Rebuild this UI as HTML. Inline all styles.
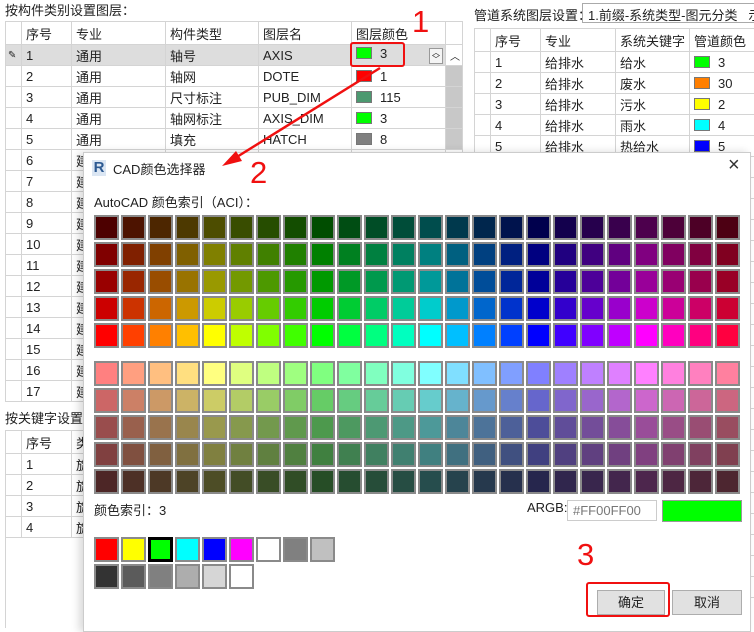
<!DOCTYPE html>
<html><head><meta charset="utf-8">
<style>
*{box-sizing:border-box;margin:0;padding:0}
body{width:754px;height:622px;overflow:hidden;background:#fff;position:relative;font-family:"Liberation Sans","Noto Sans CJK SC",sans-serif;font-size:13px;color:#222}
.abs{position:absolute}
table{border-collapse:collapse;position:absolute;table-layout:fixed}
td{border:1px solid #d4d4d4;height:21px;padding:0 0 0 4px;white-space:nowrap;overflow:hidden;font-size:13px}
tr.h td{height:23px}
.sw{display:inline-block;width:16px;height:12px;border:1px solid #777;vertical-align:-1px;margin-right:8px}
.red{color:#f01010;font-size:31px;font-family:"Liberation Sans",sans-serif}
#dlg{position:absolute;left:83px;top:152px;width:668px;height:480px;background:#fff;border:1px solid #ccc;box-shadow:-4px 0 8px rgba(0,0,0,.15)}
.cell{position:absolute;width:25px;height:25px;border:2px solid #8a8a8a}
.btn{position:absolute;height:25px;border:1px solid #adadad;background:#e1e1e1;text-align:center;line-height:23px;font-size:13px}
</style></head><body>
<div class="abs" style="left:5px;top:0px">按构件类别设置图层：</div>
<table style="left:5px;top:21px;width:457px">
<colgroup><col style="width:16px"><col style="width:50px"><col style="width:94px"><col style="width:93px"><col style="width:93px"><col style="width:94px"><col style="width:17px"></colgroup>
<tr class="h"><td></td><td>序号</td><td>专业</td><td>构件类型</td><td>图层名</td><td>图层颜色</td><td></td></tr>
<tr style="background:#ddd"><td style="font-size:10px;padding:0 0 0 2px">✎</td><td>1</td><td>通用</td><td>轴号</td><td>AXIS</td><td><span class="sw" style="background:#0f0"></span>3<span style="float:right;margin-right:2px;border:1px solid #999;width:14px;height:16px;font-size:8px;line-height:7px;text-align:center;margin-top:2px;background:#f4f4f4">︿<br>﹀</span></td><td style="background:#fff;font-size:10px">︿</td></tr>
<tr><td></td><td>2</td><td>通用</td><td>轴网</td><td>DOTE</td><td><span class="sw" style="background:#f00"></span>1</td><td style="background:#c8c8c8"></td></tr>
<tr><td></td><td>3</td><td>通用</td><td>尺寸标注</td><td>PUB_DIM</td><td><span class="sw" style="background:#4c9970"></span>115</td><td style="background:#c8c8c8"></td></tr>
<tr><td></td><td>4</td><td>通用</td><td>轴网标注</td><td>AXIS_DIM</td><td><span class="sw" style="background:#0f0"></span>3</td><td style="background:#c8c8c8"></td></tr>
<tr><td></td><td>5</td><td>通用</td><td>填充</td><td>HATCH</td><td><span class="sw" style="background:#808080"></span>8</td><td style="background:#c8c8c8"></td></tr>
<tr><td></td><td>6</td><td>建</td><td></td><td></td><td></td><td></td></tr>
<tr><td></td><td>7</td><td>建</td><td></td><td></td><td></td><td></td></tr>
<tr><td></td><td>8</td><td>建</td><td></td><td></td><td></td><td></td></tr>
<tr><td></td><td>9</td><td>建</td><td></td><td></td><td></td><td></td></tr>
<tr><td></td><td>10</td><td>建</td><td></td><td></td><td></td><td></td></tr>
<tr><td></td><td>11</td><td>建</td><td></td><td></td><td></td><td></td></tr>
<tr><td></td><td>12</td><td>建</td><td></td><td></td><td></td><td></td></tr>
<tr><td></td><td>13</td><td>建</td><td></td><td></td><td></td><td></td></tr>
<tr><td></td><td>14</td><td>建</td><td></td><td></td><td></td><td></td></tr>
<tr><td></td><td>15</td><td>建</td><td></td><td></td><td></td><td></td></tr>
<tr><td></td><td>16</td><td>建</td><td></td><td></td><td></td><td></td></tr>
<tr><td></td><td>17</td><td>建</td><td></td><td></td><td></td><td></td></tr>
</table>
<div class="abs" style="left:5px;top:408px">按关键字设置图层</div>
<table style="left:5px;top:430px;width:300px">
<colgroup><col style="width:16px"><col style="width:50px"><col style="width:234px"></colgroup>
<tr class="h"><td></td><td>序号</td><td>类</td></tr>
<tr><td></td><td>1</td><td>旋</td></tr>
<tr><td></td><td>2</td><td>旋</td></tr>
<tr><td></td><td>3</td><td>旋</td></tr>
<tr><td></td><td>4</td><td>旋</td></tr>
</table>
<div class="abs" style="left:5px;top:538px;width:1px;height:90px;background:#d4d4d4"></div>

<div class="abs" style="left:474px;top:5px">管道系统图层设置：</div>
<div class="abs" style="left:582px;top:3px;width:180px;height:20px;border:1px solid #aaa;padding:1px 0 0 5px;white-space:nowrap;overflow:hidden">1.前缀-系统类型-图元分类 &nbsp;&nbsp;示</div>
<table style="left:474px;top:28px;width:300px">
<colgroup><col style="width:16px"><col style="width:50px"><col style="width:75px"><col style="width:74px"><col style="width:85px"></colgroup>
<tr class="h"><td></td><td>序号</td><td>专业</td><td>系统关键字</td><td>管道颜色</td></tr>
<tr><td></td><td>1</td><td>给排水</td><td>给水</td><td><span class="sw" style="background:#0f0"></span>3</td></tr>
<tr><td></td><td>2</td><td>给排水</td><td>废水</td><td><span class="sw" style="background:#ff7f00"></span>30</td></tr>
<tr><td></td><td>3</td><td>给排水</td><td>污水</td><td><span class="sw" style="background:#ff0"></span>2</td></tr>
<tr><td></td><td>4</td><td>给排水</td><td>雨水</td><td><span class="sw" style="background:#0ff"></span>4</td></tr>
<tr><td></td><td>5</td><td>给排水</td><td>热给水</td><td><span class="sw" style="background:#00f"></span>5</td></tr>
<tr><td></td><td></td><td></td><td></td><td></td></tr>
<tr><td></td><td></td><td></td><td></td><td></td></tr>
<tr><td></td><td></td><td></td><td></td><td></td></tr>
<tr><td></td><td></td><td></td><td></td><td></td></tr>
<tr><td></td><td></td><td></td><td></td><td></td></tr>
<tr><td></td><td></td><td></td><td></td><td></td></tr>
<tr><td></td><td></td><td></td><td></td><td></td></tr>
<tr><td></td><td></td><td></td><td></td><td></td></tr>
<tr><td></td><td></td><td></td><td></td><td></td></tr>
<tr><td></td><td></td><td></td><td></td><td></td></tr>
<tr><td></td><td></td><td></td><td></td><td></td></tr>
<tr><td></td><td></td><td></td><td></td><td></td></tr>
<tr><td></td><td></td><td></td><td></td><td></td></tr>
<tr><td></td><td></td><td></td><td></td><td></td></tr>
<tr><td></td><td></td><td></td><td></td><td></td></tr>
<tr><td></td><td></td><td></td><td></td><td></td></tr>
<tr><td></td><td></td><td></td><td></td><td></td></tr>
<tr><td></td><td></td><td></td><td></td><td></td></tr>
<tr><td></td><td></td><td></td><td></td><td></td></tr>
<tr><td></td><td></td><td></td><td></td><td></td></tr>
<tr><td></td><td></td><td></td><td></td><td></td></tr>
</table>

<div id="dlg">
<div class="abs" style="left:8px;top:7px;width:14px;height:16px;background:#dbe6f3;color:#2d5a92;font-weight:bold;font-size:15px;line-height:16px;text-align:center">R</div>
<div class="abs" style="left:29px;top:6px;font-size:13px">CAD颜色选择器</div>
<div class="abs" style="left:644px;top:1px;font-size:20px;font-weight:300;color:#333">×</div>
<div class="abs" style="left:10px;top:39px">AutoCAD 颜色索引（ACI）：</div>
<div id="grid"></div>
<div class="abs" style="left:10px;top:347px">颜色索引：3</div>
<div class="abs" style="left:443px;top:347px">ARGB:</div>
<div class="abs" style="left:483px;top:347px;width:90px;height:21px;border:1px solid #ccc;color:#777;padding:2px 0 0 5px">#FF00FF00</div>
<div class="abs" style="left:578px;top:347px;width:80px;height:22px;border:1px solid #999;background:#0f0"></div>
<div id="quick"></div>
<div class="btn" style="left:513px;top:437px;width:68px">确定</div>
<div class="btn" style="left:588px;top:437px;width:70px">取消</div>
</div>

<div class="red abs" style="left:412px;top:4px">1</div>
<div class="abs" style="left:350px;top:42px;width:55px;height:25px;border:2px solid #f01010;border-radius:3px"></div>
<svg class="abs" style="left:0;top:0" width="754" height="622"><line x1="380" y1="68" x2="232" y2="160" stroke="#f01010" stroke-width="2.5"/><polygon points="222,166 236,151 242,161" fill="#f01010"/></svg>
<div class="red abs" style="left:250px;top:155px">2</div>
<div class="red abs" style="left:577px;top:537px">3</div>
<div class="abs" style="left:586px;top:582px;width:84px;height:35px;border:2px solid #f01010;border-radius:3px"></div>

<script>
function hsv(h,s,v){var c=v*s,x=c*(1-Math.abs((h/60)%2-1)),m=v-c,r,g,b;
if(h<60){r=c;g=x;b=0}else if(h<120){r=x;g=c;b=0}else if(h<180){r=0;g=c;b=x}else if(h<240){r=0;g=x;b=c}else if(h<300){r=x;g=0;b=c}else{r=c;g=0;b=x}
return 'rgb('+Math.round((r+m)*255)+','+Math.round((g+m)*255)+','+Math.round((b+m)*255)+')'}
var g='',vals=[0.3,0.5,0.6,0.8,1],hv=[1,0.8,0.6,0.5,0.3];
for(var r=0;r<5;r++)for(var c=0;c<24;c++){
g+='<div class="cell" style="left:'+(10+c*27)+'px;top:'+(62+r*27)+'px;background:'+hsv(c*15,1,vals[r])+'"></div>';
g+='<div class="cell" style="left:'+(10+c*27)+'px;top:'+(208+r*27)+'px;background:'+hsv(c*15,0.5,hv[r])+'"></div>';}
document.getElementById('grid').innerHTML=g;
var q1=['#f00','#ff0','#0f0','#0ff','#00f','#f0f','#fff','#808080','#c0c0c0'],q2=['#333','#5b5b5b','#808080','#adadad','#d6d6d6','#fff'],s='';
q1.forEach(function(col,i){s+='<div class="cell" style="left:'+(10+i*27)+'px;top:384px;background:'+col+(i==2?';border:3px solid #000':'')+'"></div>'});
q2.forEach(function(col,i){s+='<div class="cell" style="left:'+(10+i*27)+'px;top:411px;background:'+col+'"></div>'});
document.getElementById('quick').innerHTML=s;
</script>
</body></html>
